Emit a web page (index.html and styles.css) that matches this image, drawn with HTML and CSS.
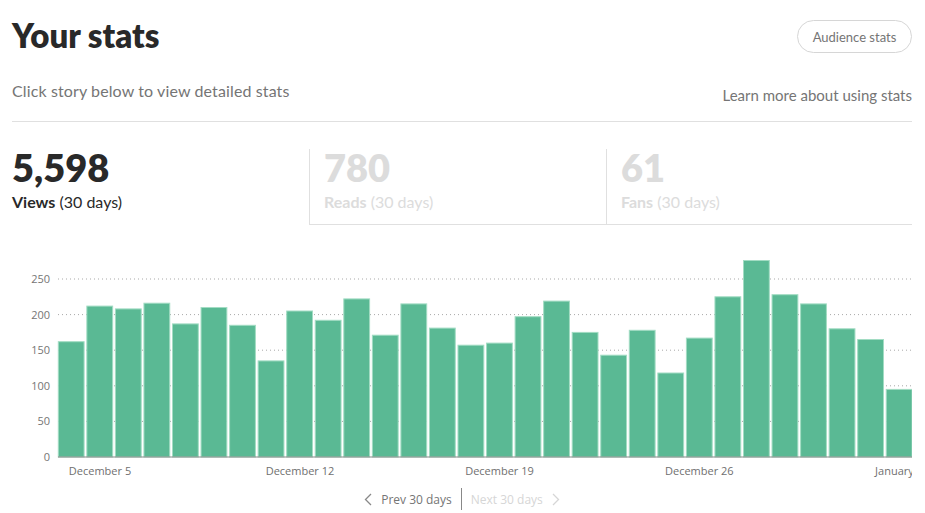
FILE: index.html
```html
<!DOCTYPE html>
<html lang="en">
<head>
<meta charset="utf-8">
<title>Your stats</title>
<link rel="stylesheet" href="styles.css">
</head>
<body>
<main class="page">
  <header class="head">
    <h1 class="title">Your stats</h1>
    <button class="pill">Audience stats</button>
  </header>
  <div class="subrow">
    <p class="sub">Click story below to view detailed stats</p>
    <a class="learn" href="#">Learn more about using stats</a>
  </div>
  <div class="tabs">
    <div class="tab active">
      <div class="num">5,598</div>
      <div class="lbl"><b>Views</b> (30 days)</div>
    </div>
    <div class="tab">
      <div class="num">780</div>
      <div class="lbl"><b>Reads</b> (30 days)</div>
    </div>
    <div class="tab">
      <div class="num">61</div>
      <div class="lbl"><b>Fans</b> (30 days)</div>
    </div>
  </div>
  <div class="chart">
    <svg width="900" height="230" viewBox="0 0 900 230">
      <g class="grid">
        <line x1="46" x2="900" y1="29" y2="29"/>
        <line x1="46" x2="900" y1="64.6" y2="64.6"/>
        <line x1="46" x2="900" y1="100.2" y2="100.2"/>
        <line x1="46" x2="900" y1="135.8" y2="135.8"/>
        <line x1="46" x2="900" y1="171.4" y2="171.4"/>
      </g>
      <g class="ylab">
        <text x="38" y="33">250</text>
        <text x="38" y="68.6">200</text>
        <text x="38" y="104.2">150</text>
        <text x="38" y="139.8">100</text>
        <text x="38" y="175.4">50</text>
        <text x="38" y="211">0</text>
      </g>
      <g class="bars">
        <rect x="46.3" y="91.7" width="25.8" height="115.3"/>
        <rect x="74.85" y="56.1" width="25.8" height="150.9"/>
        <rect x="103.4" y="58.9" width="25.8" height="148.1"/>
        <rect x="131.95" y="53.2" width="25.8" height="153.8"/>
        <rect x="160.5" y="73.9" width="25.8" height="133.1"/>
        <rect x="189.05" y="57.5" width="25.8" height="149.5"/>
        <rect x="217.6" y="75.3" width="25.8" height="131.7"/>
        <rect x="246.15" y="110.9" width="25.8" height="96.1"/>
        <rect x="274.7" y="61.0" width="25.8" height="146.0"/>
        <rect x="303.25" y="70.3" width="25.8" height="136.7"/>
        <rect x="331.8" y="48.9" width="25.8" height="158.1"/>
        <rect x="360.35" y="85.2" width="25.8" height="121.8"/>
        <rect x="388.9" y="53.9" width="25.8" height="153.1"/>
        <rect x="417.45" y="78.1" width="25.8" height="128.9"/>
        <rect x="446.0" y="95.2" width="25.8" height="111.8"/>
        <rect x="474.55" y="93.1" width="25.8" height="113.9"/>
        <rect x="503.1" y="66.7" width="25.8" height="140.3"/>
        <rect x="531.65" y="51.1" width="25.8" height="155.9"/>
        <rect x="560.2" y="82.4" width="25.8" height="124.6"/>
        <rect x="588.75" y="105.2" width="25.8" height="101.8"/>
        <rect x="617.3" y="80.3" width="25.8" height="126.7"/>
        <rect x="645.85" y="123.0" width="25.8" height="84.0"/>
        <rect x="674.4" y="88.1" width="25.8" height="118.9"/>
        <rect x="702.95" y="46.8" width="25.8" height="160.2"/>
        <rect x="731.5" y="10.5" width="25.8" height="196.5"/>
        <rect x="760.05" y="44.7" width="25.8" height="162.3"/>
        <rect x="788.6" y="53.9" width="25.8" height="153.1"/>
        <rect x="817.15" y="78.8" width="25.8" height="128.2"/>
        <rect x="845.7" y="89.5" width="25.8" height="117.5"/>
        <rect x="874.25" y="139.4" width="25.8" height="67.6"/>
      </g>
      <line class="axis" x1="46" x2="900" y1="207" y2="207"/>
      <g class="xlab">
        <text x="88" y="225">December 5</text>
        <text x="288" y="225">December 12</text>
        <text x="487.5" y="225">December 19</text>
        <text x="687.3" y="225">December 26</text>
        <text x="887" y="225">January 2</text>
      </g>
    </svg>
  </div>
  <nav class="pager">
    <a class="pg prev" href="#">
      <svg width="8" height="13" viewBox="0 0 8 13"><path d="M7 1 1.5 6.5 7 12" /></svg>
      <span>Prev 30 days</span>
    </a>
    <span class="divider"></span>
    <span class="pg next">
      <span>Next 30 days</span>
      <svg width="8" height="13" viewBox="0 0 8 13"><path d="M1 1 6.5 6.5 1 12" /></svg>
    </span>
  </nav>
</main>
</body>
</html>
```

FILE: styles.css
```css
html, body {
  margin: 0;
  padding: 0;
  background: #fff;
}
body {
  font-family: Lato, "Open Sans", sans-serif;
  color: #292929;
}
.page {
  width: 900px;
  margin-left: 12px;
}
.head {
  display: flex;
  justify-content: space-between;
  align-items: flex-start;
}
.title {
  margin: 15px 0 0;
  font-size: 33px;
  line-height: 40px;
  font-weight: 800;
  letter-spacing: 0;
  color: #292929;
}
.pill {
  margin-top: 20px;
  height: 33px;
  width: 115px;
  border: 1px solid #d6d6d6;
  border-radius: 17px;
  background: #fff;
  color: #757575;
  font-family: Lato, "Open Sans", sans-serif;
  font-size: 13px;
  padding: 0;
}
.subrow {
  display: flex;
  justify-content: space-between;
  align-items: flex-end;
  margin-top: 25px;
  padding-bottom: 19px;
  border-bottom: 1px solid #e0e0e0;
}
.sub {
  margin: 0;
  font-size: 16px;
  line-height: 22px;
  letter-spacing: 0.12px;
  color: #757575;
}
.learn {
  font-size: 15px;
  line-height: 18px;
  color: #757575;
  text-decoration: none;
  margin-bottom: -2px;
}
.tabs {
  display: grid;
  grid-template-columns: 297px 297px 1fr;
  margin-top: 27px;
}
.tab {
  padding: 0 0 12px 14px;
  border-left: 1px solid #e0e0e0;
  border-bottom: 1px solid #e0e0e0;
  color: #dcdcdc;
}
.tab.active {
  padding-left: 0;
  border-left: none;
  border-bottom-color: transparent;
  color: #292929;
}
.num {
  font-size: 38px;
  line-height: 34px;
  font-weight: 800;
  padding-top: 1px;
}
.lbl {
  margin-top: 8px;
  font-size: 16px;
  line-height: 20px;
}
.lbl b {
  font-weight: 700;
}
.chart {
  margin-top: 25px;
  height: 230px;
}
.chart svg {
  display: block;
  overflow: hidden;
}
.grid line {
  stroke: #a8a8a8;
  stroke-width: 1;
  stroke-dasharray: 1 3;
}
.bars rect {
  fill: #5ab994;
  stroke: #a2dcc3;
  stroke-width: 1;
}
.axis {
  stroke: #8a8a8a;
  stroke-width: 1;
}
.ylab text {
  font-family: "Open Sans", sans-serif;
  font-size: 11px;
  fill: #757575;
  text-anchor: end;
}
.xlab text {
  font-family: "Open Sans", sans-serif;
  font-size: 11px;
  fill: #6f6f6f;
  text-anchor: middle;
}
.pager {
  display: flex;
  justify-content: center;
  align-items: center;
  margin-top: 8px;
  height: 22px;
  font-family: "Open Sans", sans-serif;
  font-size: 12px;
}
.pg {
  display: flex;
  align-items: center;
  gap: 9px;
  text-decoration: none;
}
.prev {
  color: #757575;
}
.next {
  color: #d6d6d6;
}
.pg svg path {
  fill: none;
  stroke-width: 1.3;
}
.prev svg path {
  stroke: #888;
}
.next svg path {
  stroke: #d6d6d6;
}
.divider {
  width: 1px;
  height: 22px;
  background: #888;
  margin: 0 9px;
}
```
